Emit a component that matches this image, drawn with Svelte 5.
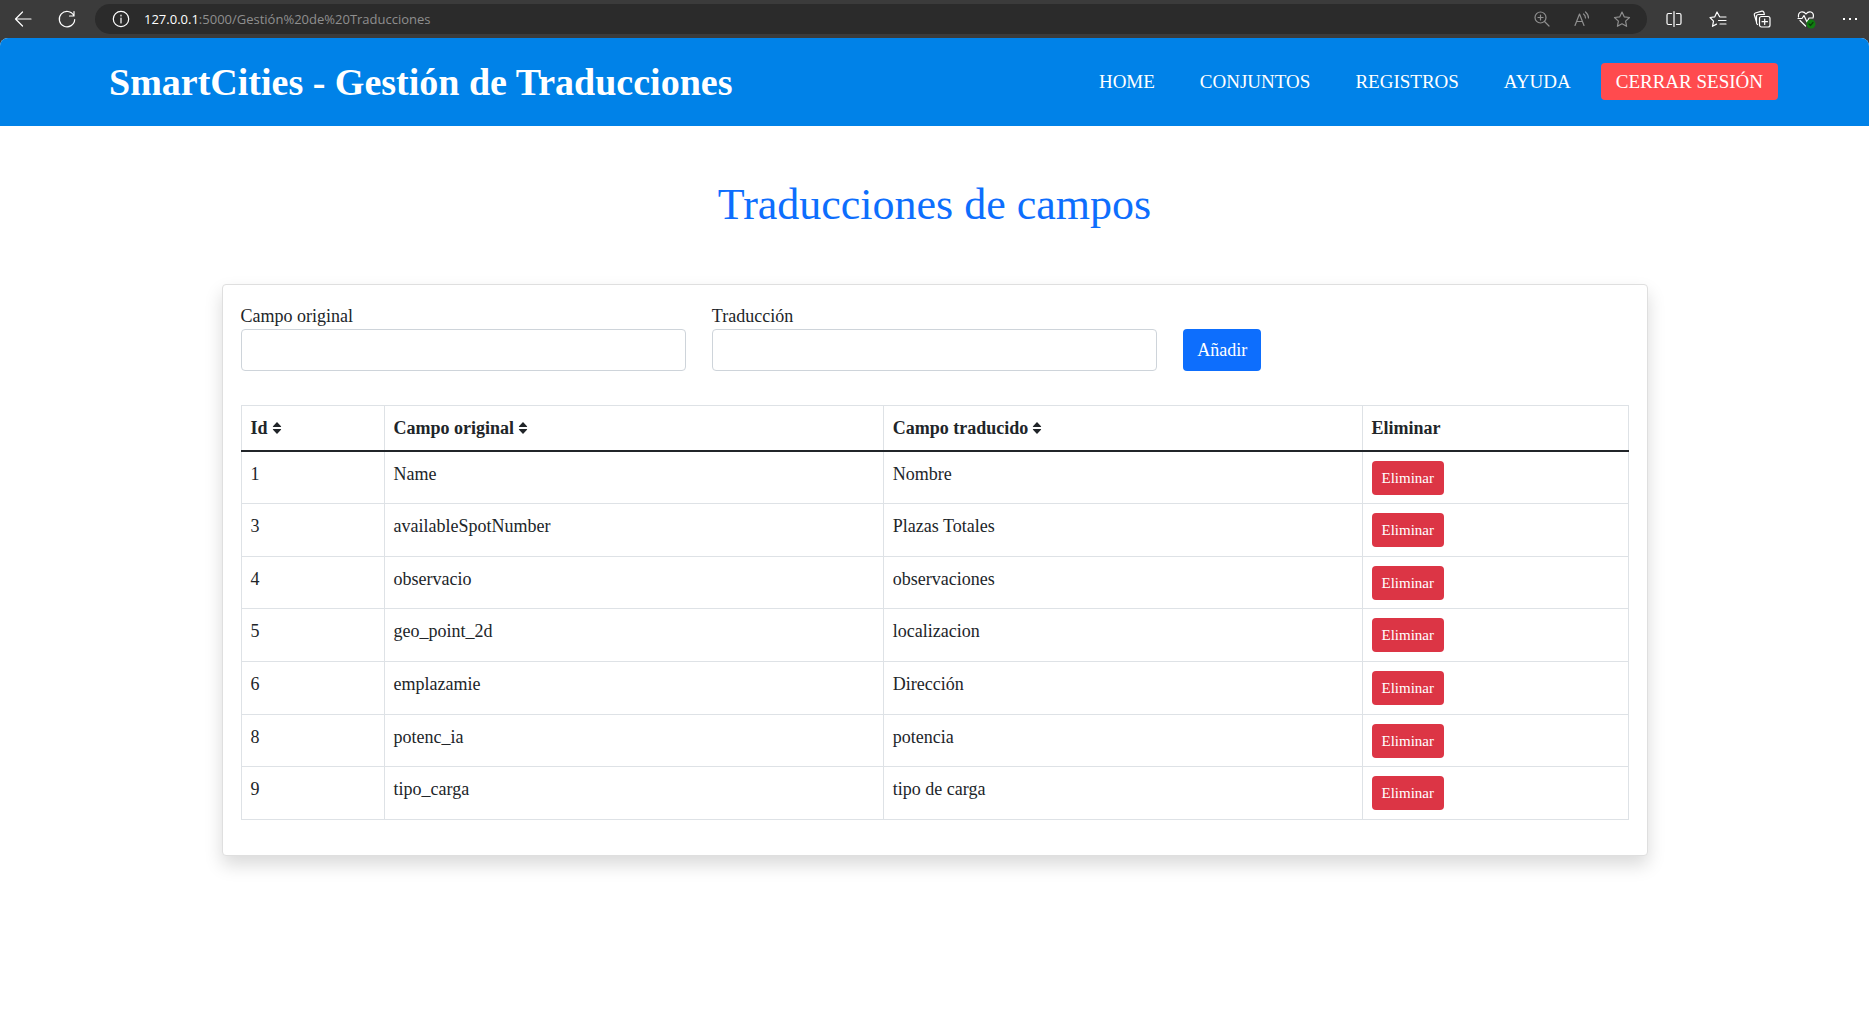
<script>
  const nav = ['HOME', 'CONJUNTOS', 'REGISTROS', 'AYUDA'];
  let rows = $state([
    { id: 1, original: 'Name', translated: 'Nombre' },
    { id: 3, original: 'availableSpotNumber', translated: 'Plazas Totales' },
    { id: 4, original: 'observacio', translated: 'observaciones' },
    { id: 5, original: 'geo_point_2d', translated: 'localizacion' },
    { id: 6, original: 'emplazamie', translated: 'Dirección' },
    { id: 8, original: 'potenc_ia', translated: 'potencia' },
    { id: 9, original: 'tipo_carga', translated: 'tipo de carga' }
  ]);
  let original = $state('');
  let translated = $state('');

  function add(event) {
    event.preventDefault();
    if (!original || !translated) return;
    const id = Math.max(0, ...rows.map((r) => r.id)) + 1;
    rows.push({ id, original, translated });
    original = '';
    translated = '';
  }
  function remove(id) {
    rows = rows.filter((r) => r.id !== id);
  }
  function sortBy(key) {
    rows = [...rows].sort((a, b) => (a[key] > b[key] ? 1 : -1));
  }
  const columns = [
    { key: 'id', label: 'Id' },
    { key: 'original', label: 'Campo original' },
    { key: 'translated', label: 'Campo traducido' }
  ];
</script>

<div class="window">
  <div class="toolbar">
    <button class="tool back" aria-label="Atrás">
      <svg viewBox="0 0 18 18"><path d="M8.500 2 1.500 9l7 7M1.500 9h15.500" /></svg>
    </button>
    <button class="tool reload" aria-label="Actualizar">
      <svg viewBox="0 0 18 18"><path d="M15.800 5.500A7.700 7.700 0 1 0 16.700 9.500M16 1.500v4.500h-4.500" /></svg>
    </button>
    <div class="address">
      <button class="tool" aria-label="Información del sitio">
        <svg viewBox="0 0 18 18"><circle cx="9" cy="9" r="7.700" /><path d="M9 8v5M9 5v1" /></svg>
      </button>
      <span class="url"><b>127.0.0.1</b>:5000/Gestión%20de%20Traducciones</span>
      <div class="tools dim">
        <button class="tool" aria-label="Zoom">
          <svg viewBox="0 0 18 18"><circle cx="7.500" cy="7.500" r="5.500" /><path d="m11.500 11.500 4.500 4.500M7.500 5v5M5 7.500h5" /></svg>
        </button>
        <button class="tool" aria-label="Leer en voz alta">
          <svg viewBox="0 0 18 18"><path d="M2 15.500 6.500 4l4.500 11.500M3.500 11.500h6M10.500 4q2 1.500 2 4M12.500 2q3 2.500 3 6" /></svg>
        </button>
        <button class="tool" aria-label="Añadir a favoritos">
          <svg viewBox="0 0 18 18"><path d="m9 2 2.200 4.800 5.300.7-3.900 3.600 1 5.200L9 13.800l-4.600 2.500 1-5.200L1.500 7.500l5.300-.7z" /></svg>
        </button>
      </div>
    </div>
    <div class="tools">
      <button class="tool" aria-label="Pantalla dividida">
        <svg viewBox="0 0 18 18"><path d="M6.500 3.500h-3a1.500 1.500 0 0 0-1.500 1.500v8a1.500 1.500 0 0 0 1.500 1.500h3M11.500 3.500h3a1.500 1.500 0 0 1 1.500 1.500v8a1.500 1.500 0 0 1-1.500 1.500h-3M9 1.500v15" /></svg>
      </button>
      <button class="tool" aria-label="Favoritos">
        <svg viewBox="0 0 18 18"><path d="M10.500 6.500 8 2 5.800 6.800l-4.800.7 3.500 3.600-1 5.200 4-2.200M11 7h6M9.500 10.500H17M11 14h6" /></svg>
      </button>
      <button class="tool" aria-label="Colecciones">
        <svg viewBox="0 0 18 18"><path d="M3.500 12 1.300 4.800q-.3-1.300 1-1.800l6.500-1.800q1.300-.3 1.900.8l.5 1.500M4.500 14.500q-1-.5-1-2V6.500a2 2 0 0 1 2-2h6" /><rect x="6.500" y="6.500" width="10.500" height="10.500" rx="2" /><path d="M11.700 9v5.500M9 11.700h5.500" /></svg>
      </button>
      <button class="tool" aria-label="Rendimiento">
        <svg viewBox="0 0 18 18"><path d="M8.500 16 3 10.500M1.500 7q-.5-4 2.500-5 3-.7 5 2 2-2.700 5-2 3.500 1.500 2 6M1 8.500h4L7 5.500l3 6.500 2-4h3" /><circle class="ok" cx="14" cy="14" r="4.500" /><path class="check" d="m12 14 1.500 1.500 2.500-3" /></svg>
      </button>
      <button class="tool" aria-label="Configuración y más">
        <svg viewBox="0 0 18 18"><path class="solid" d="M2 8h2v2H2zM8 8h2v2H8zM14 8h2v2h-2z" /></svg>
      </button>
    </div>
  </div>

  <div class="page">
    <header>
      <strong class="brand">SmartCities - Gestión de Traducciones</strong>
      <nav>
        {#each nav as item}
          <a href="#{item.toLowerCase()}">{item}</a>
        {/each}
        <a class="logout" href="#salir">CERRAR SESIÓN</a>
      </nav>
    </header>

    <main>
      <h1>Traducciones de campos</h1>
      <section class="card">
        <form onsubmit={add}>
          <div class="field">
            <label for="original">Campo original</label>
            <input id="original" type="text" bind:value={original} />
          </div>
          <div class="field">
            <label for="translated">Traducción</label>
            <input id="translated" type="text" bind:value={translated} />
          </div>
          <button class="add" type="submit">Añadir</button>
        </form>

        <table>
          <thead>
            <tr>
              {#each columns as col}
                <th class={col.key} scope="col">
                  <button class="sort" onclick={() => sortBy(col.key)}>
                    {col.label}
                    <svg viewBox="0 0 10 12"><path d="M5 0 9 4.200q.6 .8-.4 .8H1.400q-1 0-.4-.8zM5 12 9 7.800q.6-.8-.4-.8H1.400q-1 0-.4 .8z" /></svg>
                  </button>
                </th>
              {/each}
              <th class="actions" scope="col">Eliminar</th>
            </tr>
          </thead>
          <tbody>
            {#each rows as row (row.id)}
              <tr>
                <td>{row.id}</td>
                <td>{row.original}</td>
                <td>{row.translated}</td>
                <td><button class="remove" onclick={() => remove(row.id)}>Eliminar</button></td>
              </tr>
            {/each}
          </tbody>
        </table>
      </section>
    </main>
  </div>
</div>

<style>
  :global(body) {
    background: #fff;
  }
  .window,
  .window * {
    box-sizing: border-box;
  }
  .window {
    min-height: 100vh;
    background: #3b3b3b;
    color: #212529;
    font: 18px/26px 'Liberation Serif', 'Times New Roman', serif;
  }
  button,
  input {
    font: inherit;
    color: inherit;
  }
  button {
    border: 0;
    padding: 0;
    background: none;
    cursor: pointer;
  }

  .toolbar {
    display: flex;
    align-items: center;
    height: 38px;
    padding: 0 10px 0 14px;
    color: #fff;
  }
  .tool {
    display: flex;
    flex: none;
    width: 18px;
    height: 18px;
  }
  .tool svg {
    width: 18px;
    height: 18px;
    overflow: visible;
    fill: none;
    stroke: currentColor;
    stroke-width: 1.2;
    stroke-linejoin: round;
    stroke-linecap: round;
  }
  .tool .solid {
    fill: currentColor;
    stroke: none;
  }
  .tool .ok {
    fill: #107c10;
    stroke: none;
  }
  .tool .check {
    stroke: #0a3d0a;
  }
  .reload {
    margin: 0 19px 0 26px;
  }
  .address {
    display: flex;
    flex: 1;
    align-items: center;
    height: 30px;
    margin-right: 18px;
    padding: 0 16px 0 17px;
    border-radius: 15px;
    background: #2b2b2b;
  }
  .url {
    flex: 1;
    margin-left: 14px;
    color: #8f8f8f;
    font: 13px/18px 'Open Sans', sans-serif;
  }
  .url b {
    color: #fff;
    font-weight: 400;
  }
  .tools {
    display: flex;
    gap: 26px;
  }
  .dim {
    gap: 22px;
    color: #8f8f8f;
  }

  .page {
    min-height: calc(100vh - 38px);
    overflow: hidden;
    border-radius: 8px 8px 0 0;
    background: #fff;
  }
  header {
    display: flex;
    align-items: center;
    justify-content: space-between;
    padding: 22px 91px 22px 109px;
    background: #0082e8;
    color: #fff;
  }
  .brand {
    font-size: 38px;
    line-height: 44px;
  }
  nav {
    display: flex;
    align-items: center;
    gap: 15px;
    margin-bottom: 2px;
    font-size: 19px;
  }
  nav a {
    padding: 6px 15px 5px;
    border-radius: 4px;
    color: inherit;
    text-decoration: none;
  }
  .logout {
    background: #ff4b4e;
  }

  main {
    max-width: 1452px;
    margin: 0 auto;
    padding: 52px 13px;
  }
  h1 {
    margin: 0 0 53px;
    color: #0d6efd;
    font-size: 44px;
    font-weight: 400;
    line-height: 53px;
    text-align: center;
  }
  .card {
    padding: 18px 18px 35px;
    border: 1px solid #dfdfdf;
    border-radius: 4px;
    background: #fff;
    box-shadow: 0 9px 18px rgba(0, 0, 0, 0.15);
  }
  form {
    display: grid;
    grid-template-columns: repeat(3, 1fr);
    align-items: end;
    gap: 26px;
    margin-bottom: 34px;
  }
  .field {
    display: flex;
    flex-direction: column;
  }
  input {
    height: 42px;
    padding: 6px 13px;
    border: 1px solid #ced4da;
    border-radius: 4px;
    background: #fff;
  }
  .add {
    justify-self: start;
    height: 42px;
    padding: 0 14px;
    border-radius: 4px;
    background: #0d6efd;
    color: #fff;
  }

  table {
    width: 100%;
    height: 415px;
    border-collapse: collapse;
    table-layout: fixed;
  }
  th,
  td {
    padding: 9px 9px 8px;
    border: 1px solid #dee2e6;
    text-align: left;
    vertical-align: top;
  }
  thead th {
    height: 45px;
    border-bottom: 2px solid #212529;
  }
  .id {
    width: 143px;
  }
  .original {
    width: 36%;
  }
  .actions {
    width: 266px;
  }
  .sort {
    display: inline-flex;
    align-items: center;
    gap: 4px;
    font-weight: 700;
  }
  .sort svg {
    width: 10px;
    height: 12px;
    fill: currentColor;
  }
  .remove {
    display: block;
    height: 34px;
    padding: 0 10px;
    border-radius: 4px;
    background: #dc3545;
    color: #fff;
    font-size: 15px;
  }
</style>
